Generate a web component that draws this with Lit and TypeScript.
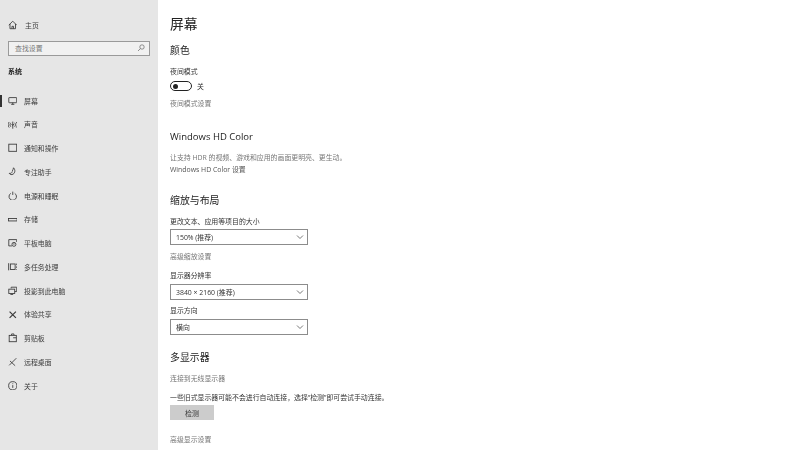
import { LitElement, html, css, svg } from "lit";
import { customElement } from "lit/decorators.js";

const s = (body: unknown) => html`<svg class="ico" viewBox="0 0 12 12" fill="none" stroke="#3a3a3a" stroke-width="1.100">${body}</svg>`;

const nav = [
  ["屏幕", svg`<rect x="1" y="2" width="10" height="6.500" rx=".5"/><path d="M4 10.500h4M6 8.500v2"/>`],
  ["声音", svg`<path d="M6 2v9M4.500 5L6 7l1.500-2"/><path d="M3.500 3.500c-1.200 1.400-1.200 3.600 0 5M8.500 3.500c1.200 1.400 1.200 3.600 0 5M1.500 2.500c-1.800 2-1.800 5 0 7M10.500 2.500c1.800 2 1.800 5 0 7"/>`],
  ["通知和操作", svg`<rect x="1" y="1.500" width="10" height="9"/>`],
  ["专注助手", svg`<path d="M7 1c2.500 2.500 2 6.500-.5 8-2 1.200-4 .5-5-1 2 .5 3.500-.5 4-2.500" /><path d="M7 1c-.3 1.500-1 3-1.500 4"/>`],
  ["电源和睡眠", svg`<path d="M3.500 3a4.700 4.700 0 1 0 5 0M6 .8v4.200"/>`],
  ["存储", svg`<rect x=".5" y="4.500" width="11" height="3"/>`],
  ["平板电脑", svg`<path d="M5 10H1V2h10v3"/><circle cx="7.500" cy="8" r="2.500"/><path d="M7.500 6.500v2"/>`],
  ["多任务处理", svg`<rect x="3" y="2.500" width="6" height="7"/><path d="M.8 1.500v9M11 2v2M11 5.500v2M11 9v1"/>`],
  ["投影到此电脑", svg`<path d="M4 3V1.500h7V7H8.500"/><rect x="1" y="4" width="7.500" height="5.500"/><path d="M3 10.800h3.500"/>`],
  ["体验共享", svg`<path d="M2 2l8 8M10 2l-8 8" stroke-width="1.500"/>`],
  ["剪贴板", svg`<rect x="1.500" y="3" width="9" height="8"/><path d="M4.500 3V1.200h3V3M6.500 6h4"/>`],
  ["远程桌面", svg`<path d="M10.500 1.500L3 9M2.500 5L9 11M1.500 10.500L3 9"/>`],
  ["关于", svg`<circle cx="6" cy="6" r="5.200"/><path d="M6 5.200v3.500M6 3v1"/>`],
];

@customElement("app-root")
export class AppRoot extends LitElement {
  static styles = css`
    :host { display: block; width: 800px; height: 450px; overflow: hidden; background: #fff;
      font-family: "Open Sans", "Noto Sans CJK SC", sans-serif; color: #333; }
    .page { display: flex; height: 450px; filter: blur(0.35px); }
    .side { width: 158px; flex: none; background: #e6e6e6; display: flex; flex-direction: column; padding-top: 13px; box-sizing: border-box; }
    .row { display: flex; align-items: center; height: 23.750px; font-size: 6.900px; color: #3c3c3c; position: relative; padding-left: 7.500px; gap: 7px; flex: none; }
    .home { gap: 8px; }
    .ico { width: 9.500px; height: 9.500px; flex: none; }
    .search { margin: 4px 8px 0 8px; height: 15px; box-sizing: border-box; border: 1px solid #9a9a9a; background: #f1f1f1;
      display: flex; align-items: center; justify-content: space-between; padding: 0 4px 0 6px; font-size: 6.900px; color: #777; flex: none; }
    .search svg { width: 8px; height: 8px; }
    .group { font-size: 7px; font-weight: 700; color: #222; margin: 9px 0 10px 8px; height: 14px; line-height: 14px; flex: none; }
    .mark { position: absolute; left: 0; top: 6px; width: 2px; height: 12px; background: #333; }
    .main { padding: 14px 0 0 12px; display: flex; flex-direction: column; align-items: flex-start; flex: 1; }
    .h1 { font-size: 13.800px; line-height: 20px; color: #222; }
    .h2 { font-size: 9.900px; line-height: 14px; color: #222; margin-top: 18px; }
    .h2.first { margin-top: 9px; }
    .h2.latin { margin-top: 21px; font-size: 9.500px; }
    .h2.multi { margin-top: 15.500px; }
    .lbl, .link, .desc { font-size: 6.900px; line-height: 10px; }
    .lbl { color: #333; margin-top: 10px; }
    .lbl.res-lbl { margin-top: 9px; }
    .lbl.near { margin-top: 6px; }
    .lbl.long { margin-top: 9px; }
    .link { color: #777; margin-top: 8px; }
    .link.res { margin-top: 6.500px; }
    .link.hd { margin-top: 2px; color: #555; }
    .link.wireless { margin-top: 10px; }
    .link.last { margin-top: 15px; }
    .desc { color: #777; margin-top: 9px; }
    .toggle-row { display: flex; align-items: center; gap: 5px; height: 10px; margin-top: 4px; font-size: 6.900px; }
    .toggle { width: 22px; height: 10px; box-sizing: border-box; border: 1.300px solid #222; border-radius: 6px; display: flex; align-items: center; padding-left: 2px; }
    .knob { width: 5px; height: 5px; border-radius: 50%; background: #222; }
    .sel { width: 138px; height: 16px; box-sizing: border-box; border: 1.300px solid #8c8c8c; display: flex; align-items: center; justify-content: space-between;
      padding: 0 3px 0 5px; font-size: 6.900px; color: #333; margin-top: 2px; }
    .sel.mid { margin-top: 3.500px; }
    .sel.tight { margin-top: 2.500px; }
    .sel svg { width: 8px; height: 6px; }
    .btn { width: 44px; height: 15px; background: #ccc; font-size: 6.900px; display: flex; align-items: center; justify-content: center; color: #333; margin-top: 2px; }
  `;

  chev() {
    return html`<svg viewBox="0 0 8 6" fill="none" stroke="#555" stroke-width=".8"><path d="M1 1.500l3 3 3-3"/></svg>`;
  }

  render() {
    return html`<div class="page">
      <aside class="side">
        <div class="row home">${s(svg`<path d="M1 6.500L6 1.500 11 6.500M2.500 5v6h7V5M5 11V8h2v3"/>`)}<span>主页</span></div>
        <div class="search"><span>查找设置</span><svg viewBox="0 0 8 8" fill="none" stroke="#666" stroke-width=".7"><circle cx="5" cy="3" r="2.200"/><path d="M3.400 4.600L1 7"/></svg></div>
        <div class="group">系统</div>
        ${nav.map(([t, b], i) => html`<div class="row">${i === 0 ? html`<span class="mark"></span>` : ""}${s(b)}<span>${t}</span></div>`)}
      </aside>
      <main class="main">
        <div class="h1">屏幕</div>
        <div class="h2 first">颜色</div>
        <div class="lbl">夜间模式</div>
        <div class="toggle-row"><div class="toggle"><div class="knob"></div></div><span>关</span></div>
        <div class="link">夜间模式设置</div>
        <div class="h2 latin">Windows HD Color</div>
        <div class="desc">让支持 HDR 的视频、游戏和应用的画面更明亮、更生动。</div>
        <div class="link hd">Windows HD Color 设置</div>
        <div class="h2">缩放与布局</div>
        <div class="lbl">更改文本、应用等项目的大小</div>
        <div class="sel"><span>150% (推荐)</span>${this.chev()}</div>
        <div class="link res">高级缩放设置</div>
        <div class="lbl res-lbl">显示器分辨率</div>
        <div class="sel mid"><span>3840 × 2160 (推荐)</span>${this.chev()}</div>
        <div class="lbl near">显示方向</div>
        <div class="sel tight"><span>横向</span>${this.chev()}</div>
        <div class="h2 multi">多显示器</div>
        <div class="link wireless">连接到无线显示器</div>
        <div class="lbl long">一些旧式显示器可能不会进行自动连接，选择“检测”即可尝试手动连接。</div>
        <div class="btn">检测</div>
        <div class="link last">高级显示设置</div>
      </main>
    </div>`;
  }
}
